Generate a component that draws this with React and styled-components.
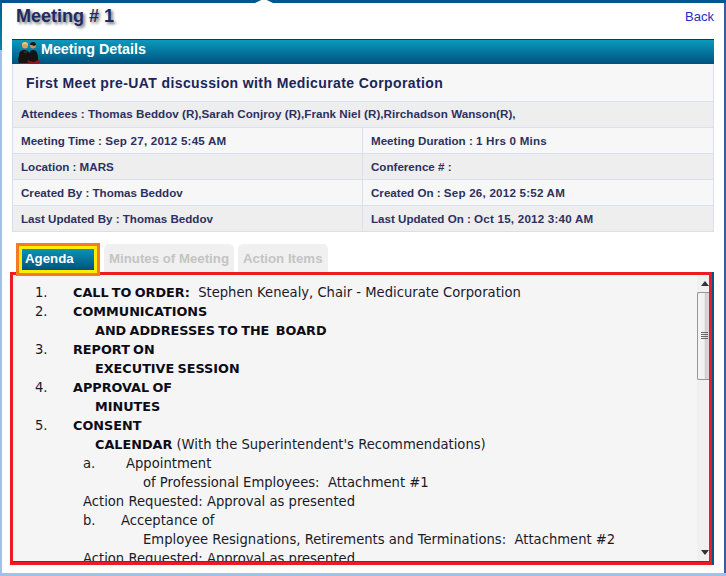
import React from "react";
import styled, { createGlobalStyle } from "styled-components";

const Global = createGlobalStyle`
  html, body { margin: 0; padding: 0; background: #fff; }
  * { box-sizing: border-box; }
`;
const Shell = styled.div`
  position: relative; width: 726px; height: 576px; overflow: hidden; background: #fff;
  display: flex; flex-direction: column;
  font-family: "Liberation Sans", Arial, sans-serif;
`;
const TopBar = styled.div`height: 3px; background: #00588a; flex: none;`;
const Notch = styled.div`
  position: absolute; left: 255px; top: 0; width: 18px; height: 3px; background: #fff;
  clip-path: polygon(0 100%, 100% 100%, 65% 0, 35% 0);
`;
const Middle = styled.div`flex: 1; display: flex; min-height: 0;`;
const LeftRail = styled.div`
  width: 2px; flex: none;
  background: linear-gradient(#00618f 0, #0784a8 47px, #a4c0ea 47px);
`;
const RightRail = styled.div`width: 2px; flex: none; background: #3a5f98;`;
const BottomRail = styled.div`height: 3px; flex: none; background: #a4c0ea;`;
const Main = styled.div`flex: 1; min-width: 0; padding: 0 10px 0 8px; display: flex; flex-direction: column;`;
const TitleRow = styled.div`
  height: 36px; flex: none; display: flex; justify-content: space-between; align-items: flex-start;
  padding: 1px 0 0 6px;
`;
const Title = styled.h1`
  margin: 0; font-size: 18px; line-height: 25px; font-weight: bold; color: #1d2b63;
  text-shadow: 2px 2px 3px #777;
`;
const Back = styled.a`font-size: 13px; line-height: 26px; color: #2a2ac0; margin: 0 0 0 auto;`;
const Panel = styled.section`
  margin-left: 2px; width: 702px; flex: none; border-right: 1px solid #d6e0ee; border-left: 1px solid #d6e0ee;
`;
const PanelHeader = styled.div`
  height: 25px; margin: 0 -1px; display: flex; align-items: center; gap: 0; padding: 0 0 6px 5px;
  border-top: 1px solid #003a80;
  background: linear-gradient(#0a9abd, #00527f);
  color: #fff; font-weight: bold; font-size: 14.3px;
`;
const MeetingName = styled.div`
  height: 38px; padding: 0 0 0 13px; background: #f7f7f7; border-bottom: 1px solid #d6e0ee;
  display: flex; align-items: center;
  font-weight: bold; font-size: 14px; letter-spacing: 0.39px; color: #1a2657;
`;
const Row = styled.div`
  display: flex; height: 26px; border-bottom: 1px solid #d6e0ee;
  background: ${p => (p.$alt ? "#eeeeee" : "#f7f7f7")};
`;
const Cell = styled.div`
  padding: 0 0 ${p => (p.$full ? "3px" : "1px")} 8px; display: flex; align-items: center;
  font-weight: bold; font-size: 11.6px; color: #2c3160;
  flex: ${p => (p.$full ? "1" : "none")};
  width: ${p => (p.$full ? "auto" : "350px")};
  border-right: ${p => (p.$first ? "1px solid #d6e0ee" : "none")};
  white-space: pre;
  letter-spacing: ${p => (p.$full ? "0.05px" : "0")};
`;
const DateValue = styled.span`letter-spacing: 0.22px;`;
const Tabs = styled.div`
  height: 43px; flex: none; display: flex; align-items: flex-start; gap: 4px; padding: 11px 0 0 6px;
  position: relative; z-index: 2;
`;
const ActiveTab = styled.div`
  width: 84px; height: 33px; border: 3px solid #f47b20; background: #ffec00;
  padding: 3px; margin-right: 0;
`;
const ActiveInner = styled.div`
  height: 100%; background: linear-gradient(#0a93b8, #00527f); color: #fff;
  font-weight: bold; font-size: 13.25px; display: flex; align-items: center; padding: 0 0 2px 3px;
`;
const Tab = styled.div`
  height: 28px; margin-top: 1px; padding: 0 5px; background: #f0f0f0; border-radius: 5px 5px 0 0;
  display: flex; align-items: center;
  color: #c4c4c4; font-weight: bold; font-size: 13.25px; white-space: nowrap;
`;
const Content = styled.section`
  width: 702px; height: 293px; flex: none; border: 3px solid #ed1c24; background: #f5f5f5;
  display: flex; margin-top: -3px; box-shadow: 2px 0 0 #00588a, inset 0 -1px 0 #00588a;
`;
const Scrolled = styled.div`
  flex: 1; min-width: 0; overflow: hidden; padding: 8px 0 0 0; margin-bottom: 1px;
  font-family: "DejaVu Sans", Verdana, sans-serif; font-size: 13.17px; line-height: 19px; color: #1a1a2a;
`;
const Line = styled.div`
  padding-left: ${p => p.$indent}px; white-space: pre; display: flex; height: 19px;
`;
const Marker = styled.span`width: ${p => p.$w}px; flex: none;`;
const Strong = styled.b`color: #0c0c18; font-size: 12.8px; word-spacing: -1.2px;`;
const Scrollbar = styled.div`
  width: 12px; flex: none; margin-bottom: 1px; background: #f0f0f0; display: flex; flex-direction: column;
  align-items: stretch;
`;
const Arrow = styled.div`
  height: 17px; flex: none; display: flex; align-items: center; justify-content: center; padding-left: 4px;
`;
const Thumb = styled.div`
  height: 88px; flex: none; border: 1px solid #969696; border-right: none; border-radius: 2px 0 0 2px;
  background: linear-gradient(90deg, #f4f4f4 0, #f0f0f0 58%, #d0d0d0 62%, #d8d8d8 100%);
  display: flex; align-items: center; justify-content: flex-end; padding: 0 1px 0 0;
`;
const Track = styled.div`flex: 1;`;

const PeopleIcon = () => (
  <svg width="24" height="24" viewBox="0 0 24 24" style={{ marginTop: 6 }}>
    <circle cx="8" cy="5.5" r="3" fill="#d9a35a" />
    <path d="M5 5a3 3 0 0 1 6 0l-3-1z" fill="#ecc67c" />
    <path d="M7 10c-3 0-5 2-5 6c-1 3-1 5 0 7h10c2-2 1-6 1-8s-2-5-6-5z" fill="#191210" />
    <path d="M6 11l3 3 2-3z" fill="#3a2a22" />
    <ellipse cx="17" cy="21.5" rx="6.5" ry="2.5" fill="#8d1a1a" />
    <circle cx="16" cy="5.5" r="3" fill="#c98f6a" />
    <path d="M13 5a3 3 0 0 1 6 0l-2 1-2-1z" fill="#1c1512" />
    <path d="M12 21c0-6 0-11 4-11s5 4 5 10l-4 2z" fill="#141414" />
  </svg>
);
const Up = () => <svg width="8" height="5" viewBox="0 0 8 5"><path d="M4 0L8 5H0z" fill="#333" /></svg>;
const Down = () => <svg width="8" height="5" viewBox="0 0 8 5"><path d="M4 5L0 0h8z" fill="#333" /></svg>;
const Grip = () => (
  <svg width="7" height="8" viewBox="0 0 7 8">
    <path d="M0 .5h7M0 2.5h7M0 4.5h7M0 6.5h7" stroke="#666" strokeWidth="1" />
  </svg>
);

const details = [
  [<>Meeting Time : <DateValue>Sep 27, 2012 5:45 AM</DateValue></>, <>Meeting Duration : <DateValue>1 Hrs 0 Mins</DateValue></>],
  ["Location : MARS", "Conference # :"],
  ["Created By : Thomas Beddov", <>Created On : <DateValue>Sep 26, 2012 5:52 AM</DateValue></>],
  ["Last Updated By : Thomas Beddov", <>Last Updated On : <DateValue>Oct 15, 2012 3:40 AM</DateValue></>],
];

export default function App() {
  return (
    <Shell>
      <Global />
      <TopBar />
      <Notch />
      <Middle>
        <LeftRail />
        <Main>
          <TitleRow>
            <Title>Meeting # 1</Title>
            <Back>Back</Back>
          </TitleRow>
          <Panel>
            <PanelHeader><PeopleIcon />Meeting Details</PanelHeader>
            <MeetingName>First Meet pre-UAT discussion with Medicurate Corporation</MeetingName>
            <Row $alt>
              <Cell $full>Attendees : Thomas Beddov (R),Sarah Conjroy (R),Frank Niel (R),Rirchadson Wanson(R),</Cell>
            </Row>
            {details.map(([a, b], i) => (
              <Row key={i} $alt={i % 2 === 1}>
                <Cell $first>{a}</Cell>
                <Cell>{b}</Cell>
              </Row>
            ))}
          </Panel>
          <Tabs>
            <ActiveTab><ActiveInner>Agenda</ActiveInner></ActiveTab>
            <Tab>Minutes of Meeting</Tab>
            <Tab>Action Items</Tab>
          </Tabs>
          <Content>
            <Scrolled>
              <Line $indent={22}><Marker $w={38}>1.</Marker><span><Strong>CALL TO ORDER:</Strong>  Stephen Kenealy, Chair - Medicurate Corporation</span></Line>
              <Line $indent={22}><Marker $w={38}>2.</Marker><Strong>COMMUNICATIONS</Strong></Line>
              <Line $indent={82}><Strong>AND ADDRESSES TO THE  BOARD</Strong></Line>
              <Line $indent={22}><Marker $w={38}>3.</Marker><Strong>REPORT ON</Strong></Line>
              <Line $indent={82}><Strong>EXECUTIVE SESSION</Strong></Line>
              <Line $indent={22}><Marker $w={38}>4.</Marker><Strong>APPROVAL OF</Strong></Line>
              <Line $indent={82}><Strong>MINUTES</Strong></Line>
              <Line $indent={22}><Marker $w={38}>5.</Marker><Strong>CONSENT</Strong></Line>
              <Line $indent={82}><span><Strong>CALENDAR</Strong> (With the Superintendent's Recommendations)</span></Line>
              <Line $indent={70}><Marker $w={43}>a.</Marker>Appointment</Line>
              <Line $indent={130}>of Professional Employees:  Attachment #1</Line>
              <Line $indent={70}>Action Requested: Approval as presented</Line>
              <Line $indent={70}><Marker $w={38}>b.</Marker>Acceptance of</Line>
              <Line $indent={130}>Employee Resignations, Retirements and Terminations:  Attachment #2</Line>
              <Line $indent={70}>Action Requested: Approval as presented</Line>
            </Scrolled>
            <Scrollbar>
              <Arrow><Up /></Arrow>
              <Thumb><Grip /></Thumb>
              <Track />
              <Arrow><Down /></Arrow>
            </Scrollbar>
          </Content>
        </Main>
        <RightRail />
      </Middle>
      <BottomRail />
    </Shell>
  );
}
